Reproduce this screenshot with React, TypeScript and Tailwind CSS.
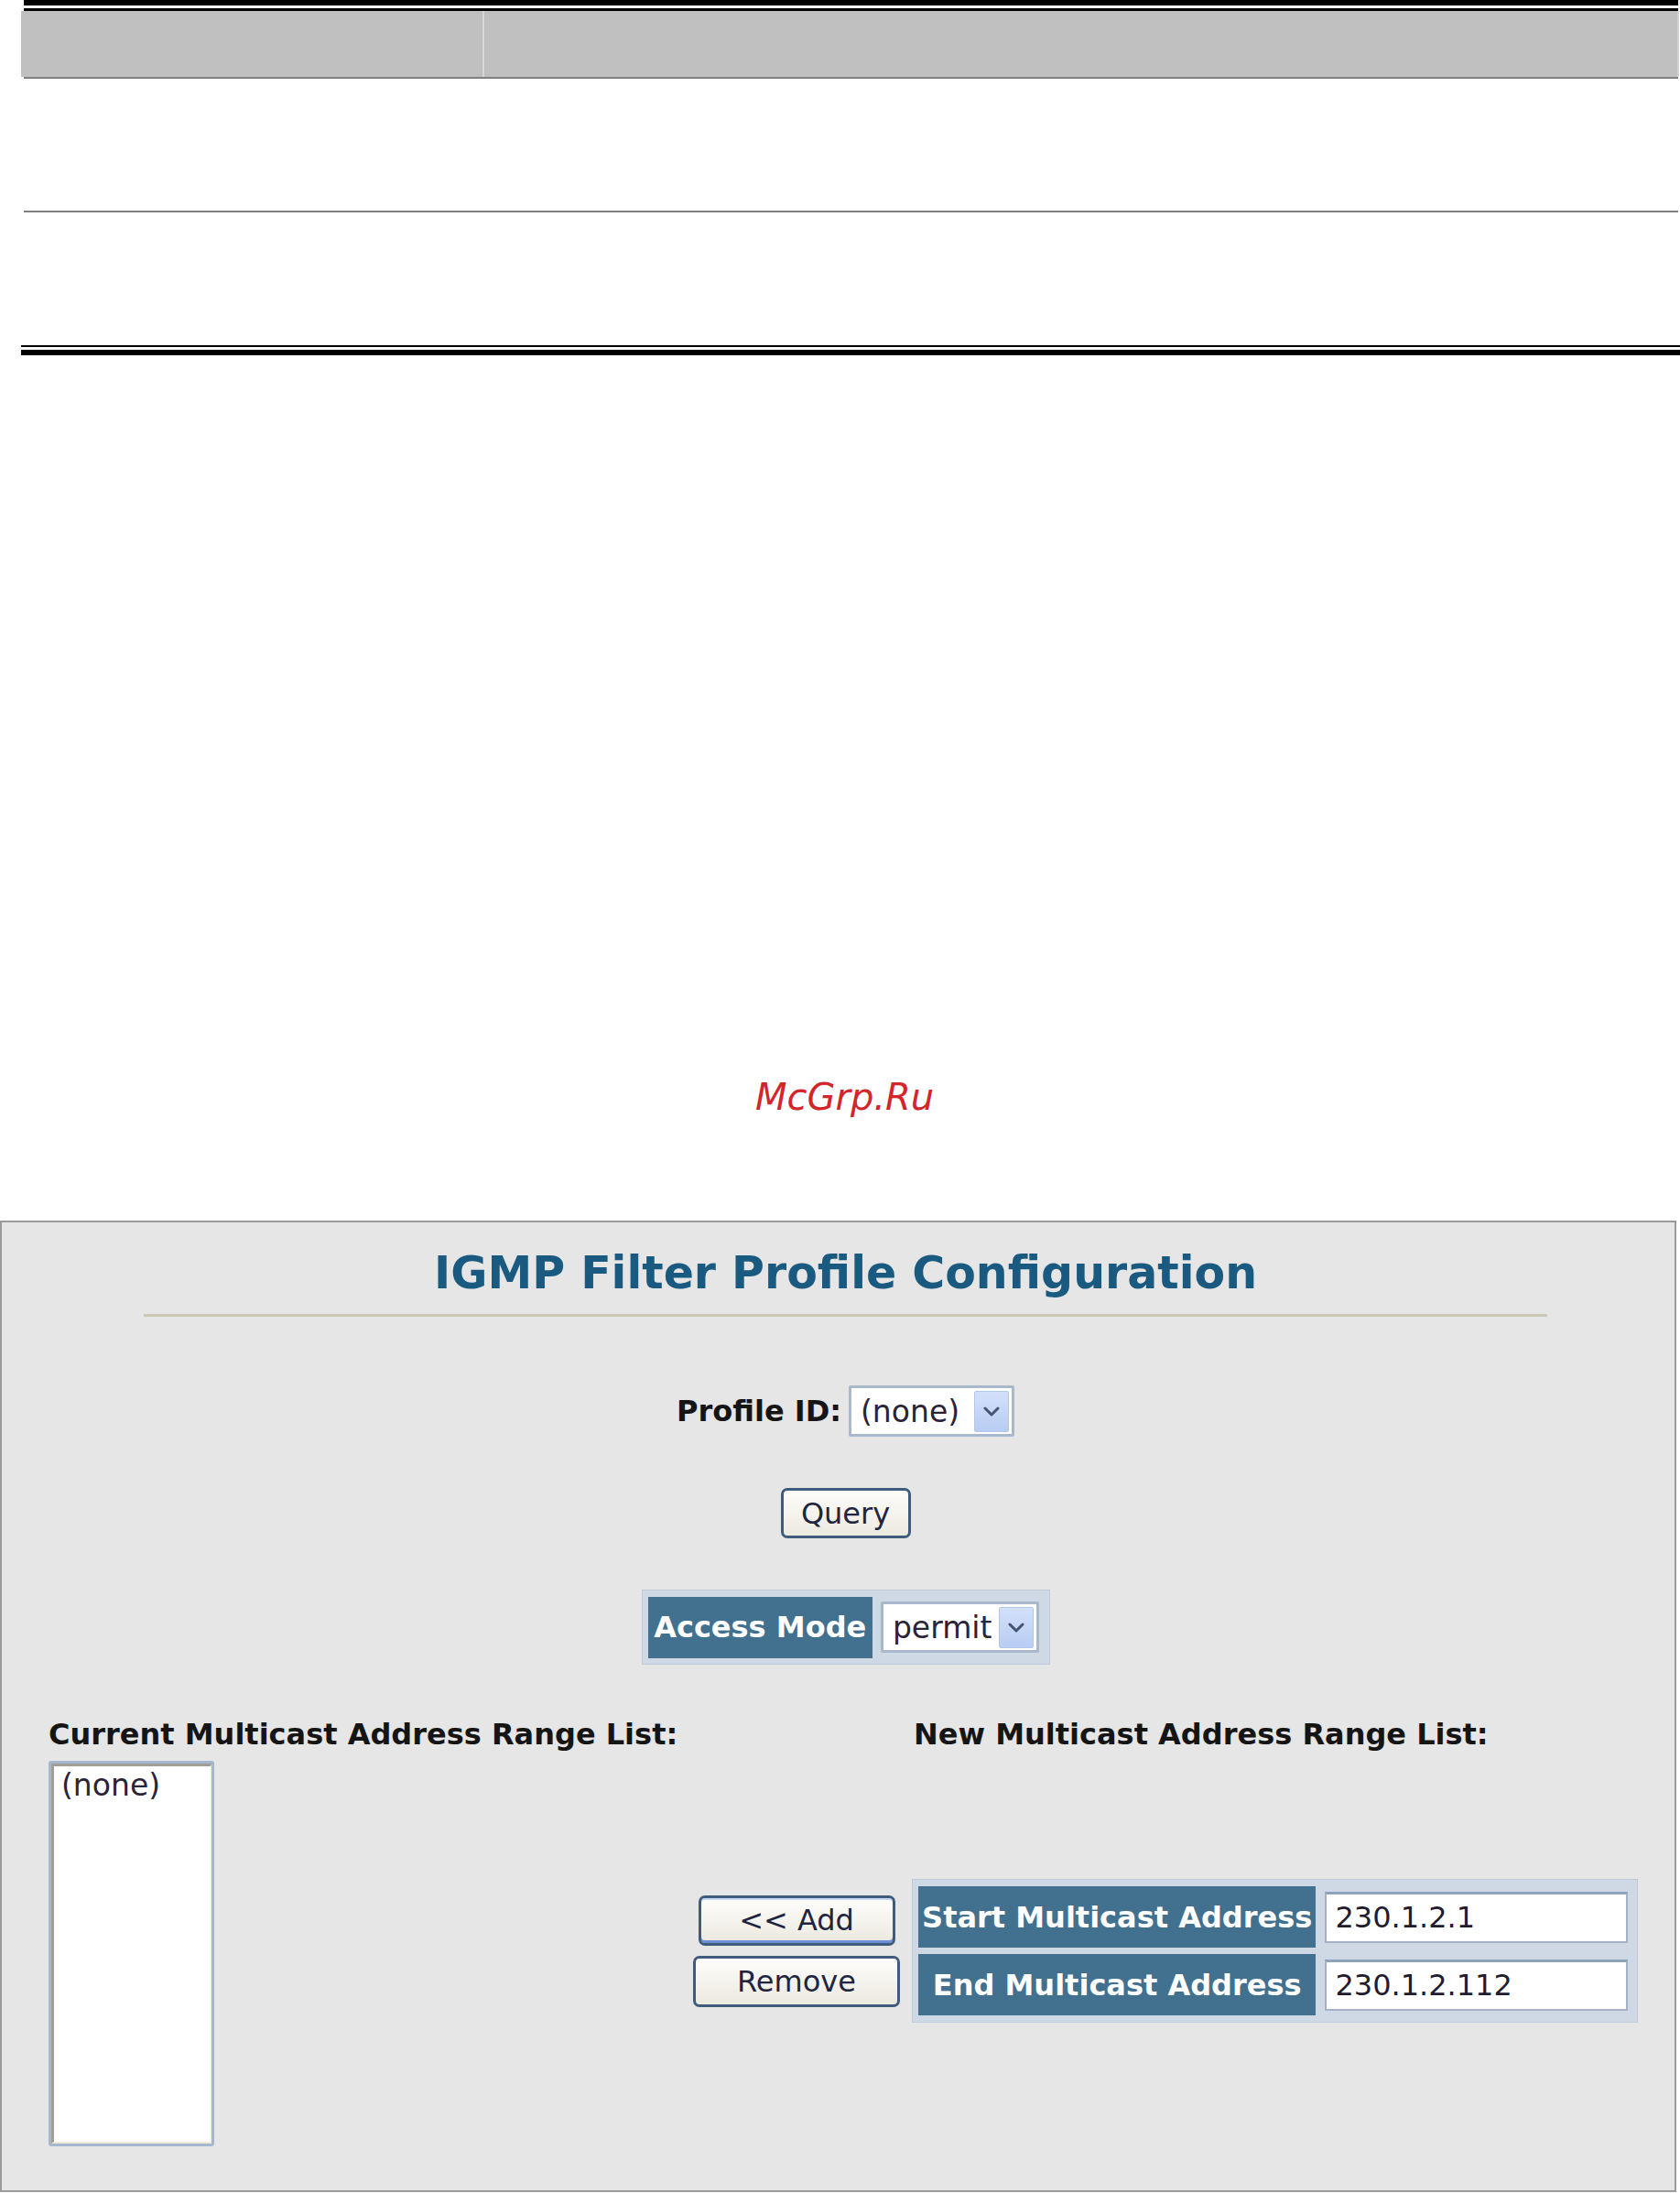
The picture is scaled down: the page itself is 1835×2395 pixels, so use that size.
import React from 'react'

const font = { fontFamily: '"DejaVu Sans", Verdana, sans-serif' }

function Chevron() {
  return (
    <svg width="18" height="11" viewBox="0 0 18 11" fill="none" stroke="#44536f" strokeWidth="3" strokeLinecap="round" strokeLinejoin="round">
      <polyline points="2 2 9 9 16 2" />
    </svg>
  )
}

function Select({ value, width }: { value: string; width: string }) {
  return (
    <div className={`flex h-[56px] ${width} items-center justify-between rounded-[2px] border-[3px] border-[#a9b8cb] bg-white pl-[10px] pr-[3px]`}>
      <span className="text-[33px] leading-none text-[#2a2438]">{value}</span>
      <span className="flex h-[45px] w-[38px] items-center justify-center rounded-[2px] border border-[#b3c6ec] bg-gradient-to-b from-[#d3e0fa] to-[#b8cdf3]">
        <Chevron />
      </span>
    </div>
  )
}

function Button({ label, className, focused }: { label: string; className: string; focused?: boolean }) {
  return (
    <button
      className={`flex items-center justify-center rounded-[7px] border-[3px] border-[#3f5c7c] bg-gradient-to-b from-[#fdfdfb] to-[#ece9df] text-[32px] leading-none text-[#1f2540] ${className} ${
        focused ? 'shadow-[inset_0_-3px_0_#6d8fd8,inset_0_2px_0_#c6d6f4]' : ''
      }`}
    >
      {label}
    </button>
  )
}

export default function App() {
  return (
    <div className="relative h-[2395px] w-[1835px] overflow-hidden bg-white" style={font}>
      {/* top table */}
      <div className="ml-[26px] mr-[2px] h-[6px] bg-black" />
      <div className="ml-[26px] mr-[2px] mt-[3px] h-[3px] bg-black" />
      <div className="ml-[23px] mr-[1px] grid h-[72px] grid-cols-[506px_1fr] bg-[#c0c0c0]">
        <div className="border-r-2 border-[#d6d6d6]" />
        <div className="border-r-2 border-[#d3d3d3]" />
      </div>
      <div className="ml-[26px] mr-[2px] h-[2px] bg-[#808080]" />
      <div className="h-[144px]" />
      <div className="ml-[26px] mr-[2px] h-[2px] bg-[#808080]" />
      <div className="h-[145px]" />
      <div className="ml-[23px] h-[2px] bg-black" />
      <div className="ml-[23px] mt-[3px] h-[6px] bg-black" />

      {/* watermark */}
      <div className="mt-[790px] pl-[825px] text-[40px] italic leading-none text-[#d2262c]">McGrp.Ru</div>

      {/* panel */}
      <div className="mt-[115px] h-[1061px] w-[1831px] border-2 border-[#9b9b9b] bg-[#e6e6e6]">
        <div className="ml-[155px] w-[1533px]">
          <h1 className="mt-[31px] text-center text-[49px] font-bold leading-none text-[#1b5a80]">
            IGMP Filter Profile Configuration
          </h1>
          <div className="mt-[20px] h-[3px] bg-[#cbc8b5]" />

          <div className="mt-[75px] flex items-center justify-center gap-[8px]">
            <span className="text-[32px] font-bold leading-none text-[#151515]">Profile ID:</span>
            <Select value="(none)" width="w-[181px]" />
          </div>

          <div className="mt-[56px] flex justify-center">
            <Button label="Query" className="h-[55px] w-[142px]" />
          </div>

          <div className="mt-[56px] flex justify-center">
            <div className="flex h-[82px] w-[446px] items-center gap-[9px] border border-[#bfcbdb] bg-[#cfd8e5] pl-[6px] pr-[11px]">
              <div className="flex h-[67px] w-[246px] items-center justify-center bg-[#42708f] text-[32px] font-bold leading-none text-white">
                Access Mode
              </div>
              <Select value="permit" width="w-[173px]" />
            </div>
          </div>
        </div>

        <div className="mt-[60px] flex pl-[51px] text-[32px] font-bold leading-none text-[#151515]">
          <span className="w-[945px]">Current Multicast Address Range List:</span>
          <span>New Multicast Address Range List:</span>
        </div>

        <div className="mt-[13px] flex items-start pl-[51px]">
          {/* current list */}
          <div className="h-[421px] w-[181px] rounded-[3px] border-[3px] border-[#a6b8cf]">
            <div className="h-full border-l-[3px] border-t-[3px] border-r border-b-2 border-l-[#a29e95] border-t-[#a29e95] border-r-[#efe9d8] border-b-[#efe9d8] bg-white pl-[8px] pt-[4px]">
              <span className="text-[33px] leading-none text-[#2a2438]">(none)</span>
            </div>
          </div>

          <div className="ml-[523px] mt-[129px] flex items-center gap-[13px]">
            <div className="flex w-[226px] flex-col items-center gap-[11px]">
              <Button label="<< Add" className="h-[55px] w-[215px]" focused />
              <Button label="Remove" className="h-[56px] w-[226px]" />
            </div>

            <div className="flex h-[157px] w-[793px] flex-col justify-center gap-[7px] border border-[#bfcbdb] bg-[#cfd8e5] pl-[6px] pr-[10px]">
              {[
                ['Start Multicast Address', '230.1.2.1'],
                ['End Multicast Address', '230.1.2.112'],
              ].map(([label, value]) => (
                <div key={label} className="flex items-center gap-[10px]">
                  <div className="flex h-[67px] w-[435px] items-center justify-center bg-[#42708f] text-[32px] font-bold leading-none text-white">
                    {label}
                  </div>
                  <div className="flex h-[56px] w-[331px] items-center border-2 border-t-[3px] border-[#a4b2c4] border-t-[#8ea2bb] bg-white pl-[9px] text-[32px] leading-none text-[#221c2e]">
                    {value}
                  </div>
                </div>
              ))}
            </div>
          </div>
        </div>
      </div>
    </div>
  )
}
